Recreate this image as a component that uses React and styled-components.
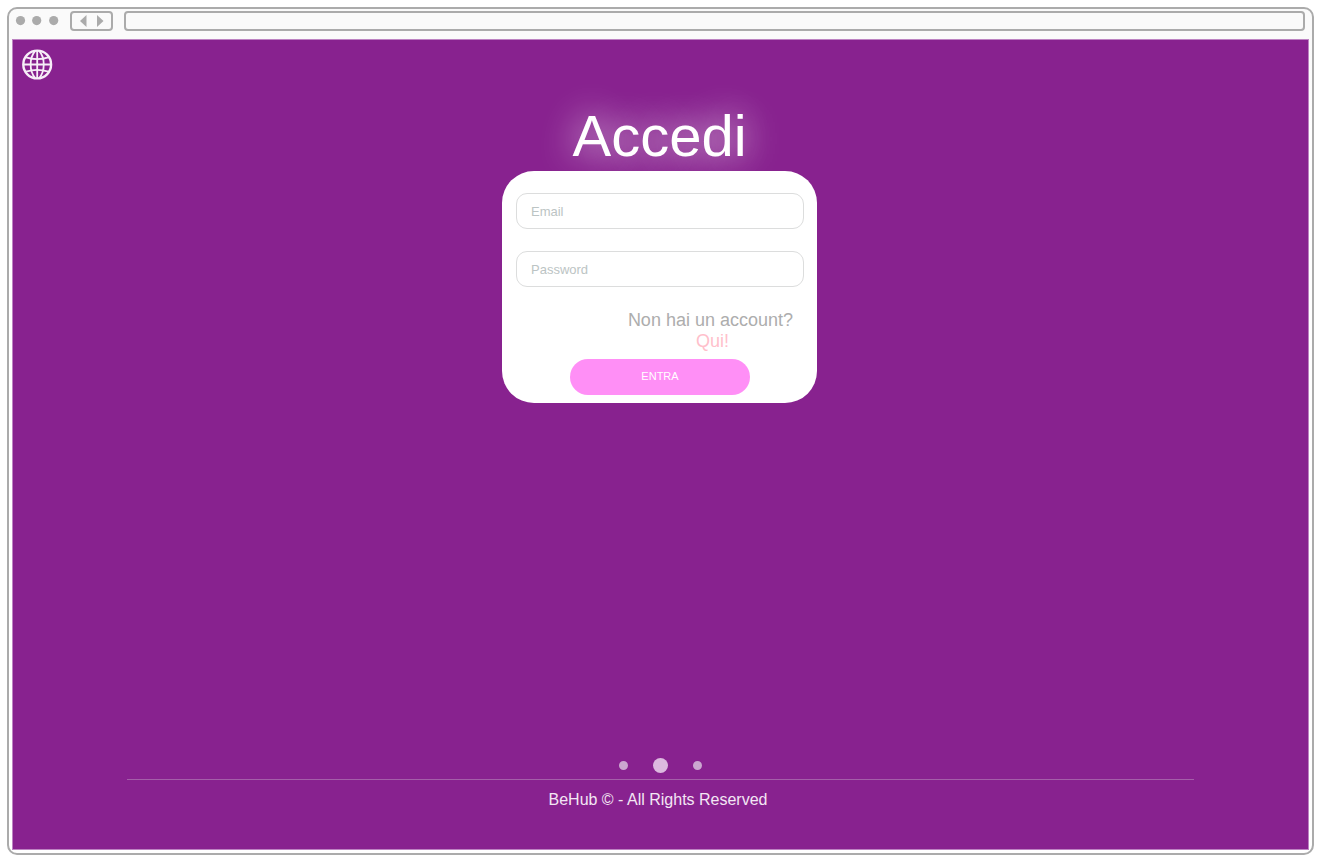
import React from "react";
import styled, { createGlobalStyle } from "styled-components";

const GlobalStyle = createGlobalStyle`
  *, *::before, *::after { box-sizing: border-box; }
  body {
    margin: 0;
    background: #fff;
    font-family: "Liberation Sans", Arial, Helvetica, sans-serif;
  }
`;

const Desktop = styled.div`
  display: flex;
  min-height: 100vh;
  padding: 7px 11px 8px 7px;
`;

const BrowserWindow = styled.div`
  flex: 1;
  display: flex;
  flex-direction: column;
  padding: 0 3px 3px;
  border: 2px solid #ababab;
  border-radius: 10px;
  background: linear-gradient(#fafafa 32px, #fff 120px);
`;

const Toolbar = styled.div`
  display: flex;
  align-items: center;
  height: 30px;
  padding: 0 4px 6px 3px;
`;

const Lights = styled.svg`
  width: 44px;
  height: 10px;
  margin-right: 11px;
  fill: #ababab;
`;

const NavButtons = styled.div`
  display: flex;
  justify-content: center;
  gap: 4px;
  width: 43px;
  height: 20px;
  margin-right: 11px;
  border: 2px solid #ababab;
  border-radius: 4px;
`;

const NavButton = styled.button`
  display: flex;
  align-items: center;
  width: 13px;
  padding: 0 3px;
  border: 0;
  background: none;

  svg {
    flex: none;
    width: 7px;
    height: 12px;
    fill: #ababab;
  }
`;

const AddressBar = styled.input`
  flex: 1;
  min-width: 0;
  height: 20px;
  padding: 0 8px;
  border: 2px solid #ababab;
  border-radius: 4px;
  background: #fafafa;
`;

const Page = styled.div`
  flex: 1;
  display: flex;
  flex-direction: column;
  align-items: center;
  padding: 9px;
  border: 1px solid #bd83c2;
  background: #88228f;
`;

const LanguageButton = styled.button`
  align-self: flex-start;
  display: flex;
  padding: 0;
  border: 0;
  background: none;

  svg {
    width: 31px;
    height: 31px;
    fill: none;
    stroke: #f7eef8;
  }
`;

const Main = styled.main`
  display: flex;
  flex-direction: column;
  align-items: center;
  padding-right: 2px;
`;

const Title = styled.h1`
  margin: 23px 0 0;
  color: #fff;
  font-size: 58px;
  font-weight: 400;
  line-height: 66px;
  text-shadow: 0 0 36px #fff;
`;

const Card = styled.form`
  position: relative;
  display: flex;
  flex-direction: column;
  align-items: center;
  width: 315px;
  padding: 22px 13px 8px 14px;
  margin-top: 2px;
  border-radius: 32px;
  background: #fff;
`;

const Field = styled.input`
  width: 100%;
  height: 36px;
  margin-bottom: 22px;
  padding: 0 14px;
  border: 1px solid #dcdddd;
  border-radius: 11px;
  background: #fff;
  color: #555;
  font: 13px "Liberation Sans", Arial, sans-serif;

  &::placeholder {
    color: #bcc4c4;
    opacity: 1;
  }
`;

const SignUp = styled.p`
  align-self: flex-end;
  margin: 1px 11px 7px 0;
  color: #adadad;
  font-size: 18px;
  line-height: 21px;
  text-align: center;
`;

const SignUpLink = styled.a`
  display: block;
  padding-left: 4px;
  color: #ffc0cb;
  text-decoration: none;
`;

const Submit = styled.button`
  width: 180px;
  height: 36px;
  padding: 0 0 2px;
  border: 0;
  border-radius: 18px;
  background: #ff8ff6;
  color: #fff;
  font: 11px "Liberation Sans", Arial, sans-serif;
`;

const Footer = styled.footer`
  display: flex;
  flex-direction: column;
  align-items: center;
  width: 100%;
  margin-top: auto;
  padding: 0 105px 31px;
`;

const Pager = styled.div`
  display: flex;
  align-items: center;
  gap: 25px;
  height: 16px;
  margin-bottom: 6px;
`;

const PageDot = styled.button`
  width: ${(p) => (p.$current ? 15 : 9)}px;
  height: ${(p) => (p.$current ? 15 : 9)}px;
  padding: 0;
  border: 0;
  border-radius: 50%;
  background: ${(p) => (p.$current ? "#dcb9df" : "#cba7d0")};
`;

const Rule = styled.hr`
  width: 100%;
  height: 1px;
  margin: 0 0 11px;
  border: 0;
  background: #a45fa9;
`;

const Copyright = styled.p`
  margin: 0 5px 0 0;
  color: #f3e6f4;
  font-size: 16px;
  line-height: 18px;
`;

function Globe() {
  return (
    <svg viewBox="0 0 31 31" aria-hidden="true">
      <circle cx="15.2" cy="15.5" r="13.9" strokeWidth="2.4" />
      <g strokeWidth="1.8">
        <path d="M15.2 2v27M2 15.5h26.5" />
        <path d="M13 2.2C7.2 9 7.2 22 13 28.8M17.4 2.2C23.2 9 23.2 22 17.4 28.8" />
        <path d="M4 8.3Q15.2 11.9 26.4 8.3M4 22.7Q15.2 19.1 26.4 22.7" />
      </g>
    </svg>
  );
}

export default function App() {
  return (
    <>
      <GlobalStyle />
      <Desktop>
        <BrowserWindow>
          <Toolbar>
            <Lights viewBox="0 0 44 10" aria-hidden="true">
              <circle cx="5.5" cy="4.6" r="4.6" />
              <circle cx="21.7" cy="4.6" r="4.6" />
              <circle cx="38.7" cy="4.6" r="4.6" />
            </Lights>
            <NavButtons>
              <NavButton type="button" aria-label="Indietro">
                <svg viewBox="0 0 7 12"><path d="M6.5 0v12L0 6z" /></svg>
              </NavButton>
              <NavButton type="button" aria-label="Avanti">
                <svg viewBox="0 0 7 12"><path d="M0 0v12L6.5 6z" /></svg>
              </NavButton>
            </NavButtons>
            <AddressBar type="text" aria-label="Indirizzo" />
          </Toolbar>
          <Page>
            <LanguageButton type="button" aria-label="Lingua">
              <Globe />
            </LanguageButton>
            <Main>
              <Title>Accedi</Title>
              <Card onSubmit={(e) => e.preventDefault()}>
                <Field type="email" placeholder="Email" aria-label="Email" />
                <Field type="password" placeholder="Password" aria-label="Password" />
                <SignUp>
                  Non hai un account?
                  <SignUpLink href="#registrati">Qui!</SignUpLink>
                </SignUp>
                <Submit type="submit">ENTRA</Submit>
              </Card>
            </Main>
            <Footer>
              <Pager>
                <PageDot type="button" aria-label="Pagina 1" />
                <PageDot type="button" aria-label="Pagina 2" $current />
                <PageDot type="button" aria-label="Pagina 3" />
              </Pager>
              <Rule />
              <Copyright>BeHub © - All Rights Reserved</Copyright>
            </Footer>
          </Page>
        </BrowserWindow>
      </Desktop>
    </>
  );
}
